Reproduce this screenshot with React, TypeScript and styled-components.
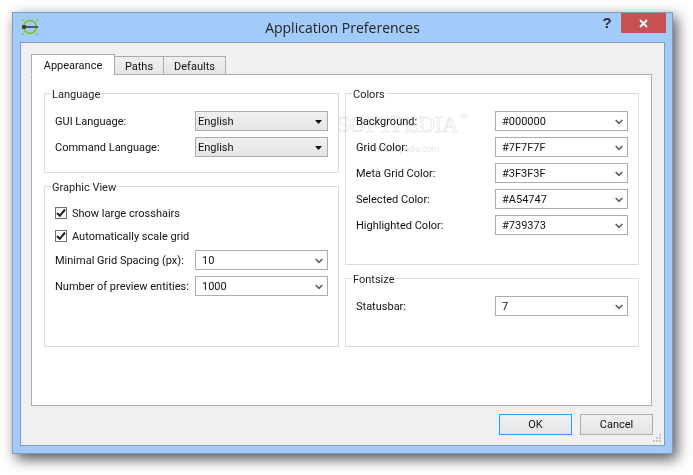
import React from "react";
import styled, { createGlobalStyle } from "styled-components";

const Global = createGlobalStyle`
  html, body { margin: 0; padding: 0; background: #fff; }
  body { width: 693px; height: 475px; overflow: hidden; font-family: Roboto, "Noto Sans", sans-serif; }
  * { box-sizing: border-box; }
`;

const Page = styled.div`
  width: 693px;
  height: 475px;
  padding: 12px 20px 21px 12px;
`;

const Win = styled.div`
  position: relative;
  width: 661px;
  height: 442px;
  display: flex;
  flex-direction: column;
  background: #a2cbf9;
  border: 1px solid #7d9cc0;
  box-shadow: 4px 5px 13px rgba(0, 0, 0, 0.68);
`;

const TitleBar = styled.div`
  height: 29px;
  flex: none;
  display: flex;
  align-items: flex-start;
  padding-left: 9px;
`;

const AppIcon = styled.svg`
  width: 16px;
  height: 16px;
  margin-top: 6px;
  flex: none;
`;

const Title = styled.div`
  flex: 1;
  text-align: center;
  padding: 5px 0 0 49px;
  font-family: "Open Sans", sans-serif;
  font-size: 14px;
  line-height: 20px;
  color: #222;
`;

const HelpMark = styled.div`
  width: 18px;
  margin-top: 2px;
  font-family: "Liberation Sans", sans-serif;
  font-weight: 700;
  font-size: 15px;
  line-height: 15px;
  color: #2c2c2c;
  text-align: center;
`;

const CloseBtn = styled.div`
  width: 45px;
  height: 20px;
  margin: 0 6px 0 5px;
  background: #c75050;
  display: flex;
  align-items: center;
  justify-content: center;
`;

const Client = styled.div`
  position: relative;
  flex: 1;
  margin: 0 7px 7px 7px;
  background: #f0f0f0;
  border: 1px solid #7d9cc0;
  padding: 11px 0 0 10px;
  display: flex;
  flex-direction: column;
`;

const TabRow = styled.div`
  display: flex;
  align-items: flex-end;
  height: 21px;
  position: relative;
  z-index: 1;
  margin-bottom: -1px;
`;

const Tab = styled.div<{ $active?: boolean; $w: number }>`
  width: ${(p) => p.$w}px;
  height: ${(p) => (p.$active ? 21 : 19)}px;
  margin-left: ${(p) => (p.$active ? 0 : -1)}px;
  background: ${(p) => (p.$active ? "#fff" : "linear-gradient(#f0f0f0, #e5e5e5)")};
  border: 1px solid #acacac;
  border-bottom: 1px solid ${(p) => (p.$active ? "#fff" : "#acacac")};
  font-size: 11px;
  line-height: ${(p) => (p.$active ? 21 : 20)}px;
  text-align: center;
  color: #111;
`;

const Pane = styled.div`
  width: 621px;
  height: 332px;
  background: #fff;
  border: 1px solid #acacac;
  padding: 18px 12px 0 12px;
  display: grid;
  grid-template-columns: 295px 294px;
  column-gap: 6px;
  align-items: start;
`;

const Column = styled.div`
  display: flex;
  flex-direction: column;
  gap: 13px;
`;

const Group = styled.div<{ $h: number }>`
  position: relative;
  height: ${(p) => p.$h}px;
  border: 1px solid #dcdcdc;
  padding: 17px 10px 0 10px;
  display: flex;
  flex-direction: column;
`;

const GroupTitle = styled.div`
  position: absolute;
  top: -7px;
  left: 6px;
  padding: 0 1px;
  background: #fff;
  font-size: 11px;
  line-height: 15px;
  color: #222;
`;

const Row = styled.div`
  display: flex;
  align-items: center;
  justify-content: space-between;
  height: 20px;
  margin-bottom: 6px;
  font-size: 11px;
  color: #111;
  white-space: nowrap;
`;

const CheckList = styled.div`
  display: flex;
  flex-direction: column;
  gap: 7px;
  padding-top: 1px;
  margin-bottom: 6px;
`;

const CheckRow = styled.label`
  display: flex;
  align-items: center;
  gap: 5px;
  height: 16px;
  font-size: 11px;
  color: #111;
`;

const Box = styled.span`
  width: 12px;
  height: 12px;
  border: 1px solid #707070;
  background: #fff;
  display: flex;
  align-items: center;
  justify-content: center;
`;

const Combo = styled.div<{ $solid?: boolean }>`
  width: 133px;
  height: 20px;
  border: 1px solid #acacac;
  background: ${(p) => (p.$solid ? "linear-gradient(#f0f0f0, #e5e5e5)" : "#fff")};
  display: flex;
  align-items: center;
  justify-content: space-between;
  padding: 1px ${(p) => (p.$solid ? 5 : 4)}px 0 ${(p) => (p.$solid ? 2 : 6)}px;
  font-size: 11px;
  color: #111;
`;

const Footer = styled.div`
  display: flex;
  justify-content: flex-end;
  gap: 8px;
  padding: 8px 11px 0 0;
`;

const Btn = styled.div<{ $primary?: boolean }>`
  width: 73px;
  height: 21px;
  border: 1px solid ${(p) => (p.$primary ? "#3399ff" : "#acacac")};
  background: linear-gradient(#f0f0f0, #e5e5e5);
  font-size: 11px;
  line-height: 19px;
  text-align: center;
  color: #111;
`;

const Grip = styled.svg`
  position: absolute;
  right: 3px;
  bottom: 3px;
  width: 8px;
  height: 8px;
`;

const Mark = styled.div`
  position: absolute;
  left: 316px;
  top: 70px;
  pointer-events: none;
  mix-blend-mode: multiply;
`;

const MarkMain = styled.div`
  font-family: "Liberation Serif", serif;
  font-size: 23px;
  line-height: 24px;
  letter-spacing: -0.3px;
  color: #fff;
  -webkit-text-stroke: 0.7px #e4e4e4;
`;

const MarkTm = styled.sup`
  font-family: "Liberation Sans", sans-serif;
  font-size: 5px;
  line-height: 5px;
  color: #e0e0e0;
  -webkit-text-stroke: 0;
  vertical-align: 14px;
  margin-left: 2px;
`;

const MarkSub = styled.div`
  margin: 6px 0 0 27px;
  font-size: 9px;
  line-height: 12px;
  letter-spacing: -0.3px;
  color: #e4e4e4;
`;

const Chevron = () => (
  <svg width="8" height="6" viewBox="0 0 8 6">
    <path d="M0.7 1 L4 4.3 L7.3 1" fill="none" stroke="#606060" strokeWidth="1.7" />
  </svg>
);

const Arrow = () => (
  <svg width="7" height="4" viewBox="0 0 7 4">
    <path d="M0 0 H7 L3.5 4 Z" fill="#111" />
  </svg>
);

const Tick = () => (
  <svg width="10" height="10" viewBox="0 0 10 10">
    <path d="M1 5 L3.8 7.8 L9 1.5" fill="none" stroke="#222" strokeWidth="2" />
  </svg>
);

const Field = ({ label, value, solid }: { label: string; value: string; solid?: boolean }) => (
  <Row>
    <span>{label}</span>
    <Combo $solid={solid}>
      <span>{value}</span>
      {solid ? <Arrow /> : <Chevron />}
    </Combo>
  </Row>
);

const Check = ({ label }: { label: string }) => (
  <CheckRow>
    <Box>
      <Tick />
    </Box>
    {label}
  </CheckRow>
);

export default function App() {
  return (
    <Page>
      <Global />
      <Win>
        <TitleBar>
          <AppIcon viewBox="0 0 16 16">
            <circle cx="8" cy="8" r="6.4" fill="none" stroke="#7ec400" strokeWidth="1.5" />
            <path d="M0 8 H16" stroke="#3a3a3a" strokeWidth="1.6" />
            <rect x="0" y="6.2" width="4" height="3.6" fill="#3a3a3a" />
            <path d="M0 .7h1.6M14.4 .7H16M0 15.3h1.6M14.4 15.3H16" stroke="#7ec400" strokeWidth="1.4" />
          </AppIcon>
          <Title>Application Preferences</Title>
          <HelpMark>?</HelpMark>
          <CloseBtn>
            <svg width="9" height="9" viewBox="0 0 9 9">
              <path d="M1 1 L8 8 M8 1 L1 8" stroke="#fff" strokeWidth="1.8" />
            </svg>
          </CloseBtn>
        </TitleBar>
        <Client>
          <TabRow>
            <Tab $active $w={84}>Appearance</Tab>
            <Tab $w={50}>Paths</Tab>
            <Tab $w={63}>Defaults</Tab>
          </TabRow>
          <Pane>
            <Column>
              <Group $h={80}>
                <GroupTitle>Language</GroupTitle>
                <Field label="GUI Language:" value="English" solid />
                <Field label="Command Language:" value="English" solid />
              </Group>
              <Group $h={161}>
                <GroupTitle>Graphic View</GroupTitle>
                <CheckList>
                  <Check label="Show large crosshairs" />
                  <Check label="Automatically scale grid" />
                </CheckList>
                <Field label="Minimal Grid Spacing (px):" value="10" />
                <Field label="Number of preview entities:" value="1000" />
              </Group>
            </Column>
            <Column>
              <Group $h={172}>
                <GroupTitle>Colors</GroupTitle>
                <Field label="Background:" value="#000000" />
                <Field label="Grid Color:" value="#7F7F7F" />
                <Field label="Meta Grid Color:" value="#3F3F3F" />
                <Field label="Selected Color:" value="#A54747" />
                <Field label="Highlighted Color:" value="#739373" />
              </Group>
              <Group $h={69}>
                <GroupTitle>Fontsize</GroupTitle>
                <Field label="Statusbar:" value="7" />
              </Group>
            </Column>
          </Pane>
          <Footer>
            <Btn $primary>OK</Btn>
            <Btn>Cancel</Btn>
          </Footer>
          <Grip viewBox="0 0 8 8">
            <path d="M6 0h2v2H6zM3 3h2v2H3zM6 3h2v2H6zM0 6h2v2H0zM3 6h2v2H3zM6 6h2v2H6z" fill="#c4c4c4" />
          </Grip>
          <Mark>
            <MarkMain>SOFTPEDIA<MarkTm>TM</MarkTm></MarkMain>
            <MarkSub>www.softpedia.com</MarkSub>
          </Mark>
        </Client>
      </Win>
    </Page>
  );
}
